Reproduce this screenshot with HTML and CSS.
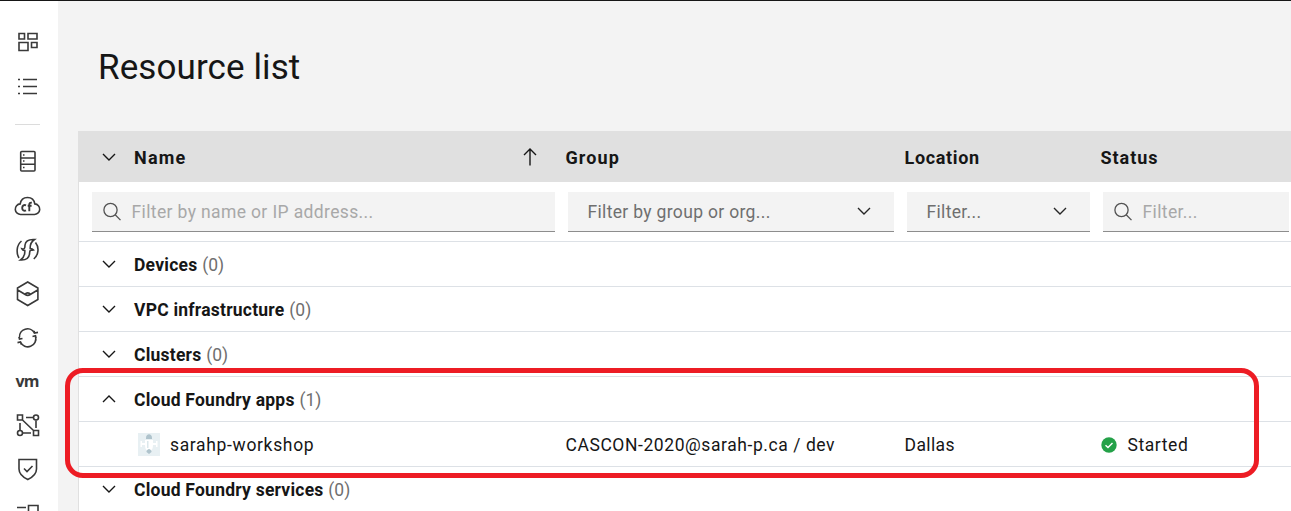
FILE: index.html
```html
<!DOCTYPE html>
<html lang="en">
<head>
<meta charset="utf-8">
<title>Resource list</title>
<link rel="stylesheet" href="styles.css">
</head>
<body>
<svg class="defs" aria-hidden="true">
  <symbol id="chevron" viewBox="0 0 14 8"><path d="M1 1l6 6 6-6"/></symbol>
  <symbol id="search" viewBox="0 0 20 20"><circle cx="8.500" cy="8" r="6.600"/><path d="M13.200 12.800l5.300 5.300"/></symbol>
</svg>
<div class="app">
  <nav class="sidebar">
    <svg class="nav-icon" viewBox="0 0 28 28"><path d="M5 5.500h5.500v5.500H5zM14 5.500h9v5.500h-9zM5 14.500h9v8H5zM17.500 14.500h5.500v5h-5.500z"/></svg>
    <svg class="nav-icon list" viewBox="0 0 28 28"><path d="M4 6.500h2M9 6.500h14M4 13.500h2M9 13.500h14M4 20.500h2M9 20.500h14"/></svg>
    <div class="divider"></div>
    <svg class="nav-icon" viewBox="0 0 28 28"><rect x="6.700" y="4.500" width="14.300" height="19.500" rx="1"/><path d="M7 11h14M7 17.300h14"/><path class="dots" d="M9 7.200h1.500v1.500H9zM9 13.300h1.500v1.500H9zM9 19.700h1.500v1.500H9z"/></svg>
    <svg class="nav-icon cloud" viewBox="0 0 28 28"><path d="M7 22.500h13a5.300 5.300 0 0 0 .8-10.600C20.200 8 17.200 5.500 13.500 5.500S6.800 8 6.200 11.900a5.300 5.300 0 0 0 .8 10.600z"/><path class="cf" d="M12 13.300c-1.700-.8-3.800 0-3.800 2.600s2.100 3.400 3.800 2.500M15.300 19.200v-6.500c0-1.600.8-2.200 2.500-1.900M13.700 13.800h3.900"/></svg>
    <svg class="nav-icon" viewBox="0 0 28 28"><path d="M20.500 3.500c-5-.3-9 1.200-9.500 5.500-.2 1.500.2 2.500-.7 3.500-.6.700-1.500.5-2.500.2.600 1.500 2 1.800 3 1.900.2 3.900-1.300 7.400-4.300 9.400 5 .3 8.500-2 9-6 .2-1.500 0-2.800.9-3.500.7-.6 1.700-.3 3.100-.5-.9-1.200-2-1.500-3.300-1.500-.2-4 1.300-7 4.300-9zM7.500 5c-5 4-5.500 12-2.500 17M21.500 6.500c4 5 3 12.500-1.700 16.500"/></svg>
    <svg class="nav-icon" viewBox="0 0 28 28"><path d="M13.700 2l10.200 6v11.500l-10.200 6-10.200-6V8zM3.700 10l7.500 4.500c1.500 1 3.500 1 5 0l7.500-4.500M11.200 14.500c1-2.200 4-2.200 5 0"/></svg>
    <svg class="nav-icon" viewBox="0 0 28 28"><path d="M5.500 13.500A8 8 0 0 1 20.500 9M21.500 12.500A8 8 0 0 1 6.500 18M18.500 12.500l3-.7.600 2.400M20.200 6.800l.3 2.200 3.500-.6M8.500 14.500l-3 .6-.6-2.400M3.500 18.600l3-.6.800 2.600"/></svg>
    <div class="nav-icon vm">vm</div>
    <svg class="nav-icon" viewBox="0 0 28 28"><path d="M3.500 4h5v5h-5zM19.500 19.500h5v5h-5zM8.500 9l11 10.500M12 6.500h7M22 9.500V17M6 12v7.500M9 22h8"/><circle cx="22" cy="6.500" r="2.500"/><circle cx="6" cy="22" r="2.500"/></svg>
    <svg class="nav-icon" viewBox="0 0 28 28"><path d="M5 4.500h17.500V14c0 5-3.500 8-8.700 10.500C8.500 22 5 19 5 14zM10 13.500l3 3 5.500-5.500"/></svg>
    <svg class="nav-icon" viewBox="0 0 28 28"><path d="M3 8.500h9M14.500 6.500h9.500v9h-9.500z"/></svg>
  </nav>
  <main class="main">
    <h1 class="title">Resource list</h1>
    <section class="table">
      <div class="columns head">
        <div class="cell"><svg class="chevron"><use href="#chevron"/></svg><span class="w-name">Name</span><svg class="sort" viewBox="0 0 14 18"><path d="M7 17.500V1M1 7l6-6 6 6"/></svg></div>
        <div class="cell"><span class="w-group">Group</span></div>
        <div class="cell"><span class="w-location">Location</span></div>
        <div class="cell"><span class="w-status">Status</span></div>
      </div>
      <div class="filters">
        <div class="field search"><svg class="lens"><use href="#search"/></svg><span>Filter by name or IP address...</span></div>
        <div class="field select"><span>Filter by group or org...</span><svg class="chevron"><use href="#chevron"/></svg></div>
        <div class="field select"><span>Filter...</span><svg class="chevron"><use href="#chevron"/></svg></div>
        <div class="field search"><svg class="lens"><use href="#search"/></svg><span>Filter...</span></div>
      </div>
      <div class="row"><svg class="chevron"><use href="#chevron"/></svg><b>Devices</b><span class="count">(0)</span></div>
      <div class="row"><svg class="chevron"><use href="#chevron"/></svg><b>VPC infrastructure</b><span class="count">(0)</span></div>
      <div class="row"><svg class="chevron"><use href="#chevron"/></svg><b>Clusters</b><span class="count">(0)</span></div>
      <div class="row"><svg class="chevron up"><use href="#chevron"/></svg><b>Cloud Foundry apps</b><span class="count">(1)</span></div>
      <div class="columns item">
        <div class="cell app-name"><svg class="thumb" viewBox="0 0 22 23"><path fill="#e8f0f3" d="M0 0h22v23H0z"/><path fill="#fff" d="M2.500 8h1.500v2h3V7h8v3h3V8h1.500v6H18v-2h-3c0 3-1 5-2 5H9c-1 0-2-2-2-5H4v2H2.500z"/><path fill="#afc3cc" d="M8 5c0-5 6-5 6 0v1H8zM8.500 18q2.500-4 5 0v1l-2.500 2-2.500-2z"/><path fill="#dce8ec" d="M9 8h1.500v7H9z"/></svg><span class="w-workshop">sarahp-workshop</span></div>
        <div class="cell"><span>CASCON-2020@sarah-p.ca / dev</span></div>
        <div class="cell"><span class="w-dallas">Dallas</span></div>
        <div class="cell"><svg class="ok" viewBox="0 0 16 16"><circle cx="8" cy="8" r="7.700"/><path d="M4.500 8.200l2.500 2.400 4.500-4.700"/></svg><span>Started</span></div>
      </div>
      <div class="row"><svg class="chevron"><use href="#chevron"/></svg><b>Cloud Foundry services</b><span class="count">(0)</span></div>
    </section>
  </main>
  <div class="highlight"></div>
</div>
</body>
</html>
```
FILE: styles.css
```css
* { box-sizing: border-box; }
body { margin: 0; background: #f3f3f3; color: #161616; font: 17.5px/24px Roboto, "Liberation Sans", sans-serif; overflow: hidden; }
.defs { position: absolute; width: 0; height: 0; }
svg { fill: none; stroke: currentColor; flex: none; }
.app { display: flex; height: 511px; border-top: 1px solid #161616; overflow: hidden; position: relative; }
.sidebar { width: 58px; flex: none; background: #fff; display: flex; flex-direction: column; align-items: center; gap: 16px; padding: 27px 2px 0 0; color: #393939; }
.nav-icon { width: 28px; height: 28px; flex: none; stroke-width: 1.6; }
.nav-icon.list, .nav-icon.cloud { margin-top: 1px; }
.nav-icon .dots { fill: currentColor; stroke: none; }
.nav-icon .cf { stroke-width: 1.9; }
.divider { width: 25px; height: 1px; background: #dcdcdc; flex: none; margin: 7px 2px 6px 0; }
.nav-icon.vm { font: bold 16px/28px "Open Sans", sans-serif; text-align: center; letter-spacing: -.9px; margin-top: -1px; padding-right: 2px; }
.main { flex: 1; min-width: 0; padding-left: 20px; }
.title { margin: 0; height: 130px; padding: 44px 0 0 20px; font-size: 35px; line-height: 46px; font-weight: 400; letter-spacing: .1px; }
.table { background: #fff; border-left: 1px solid #e0e0e0; }
.columns { display: grid; grid-template-columns: 486.5px 339px 196px 190.500px; }
.cell { display: flex; align-items: center; white-space: nowrap; }
.head { height: 51px; background: #e0e0e0; font-weight: 700; font-size: 18px; padding-top: 1px; }
.head span { padding-top: 2px; }
.w-name { letter-spacing: 1.2px; }
.w-group { letter-spacing: 1.1px; }
.w-location { letter-spacing: .65px; }
.w-status { letter-spacing: .95px; }
.chevron { width: 14px; height: 8px; stroke-width: 1.4; }
.head .chevron, .row .chevron { margin: -1px 18px 0 23px; }
.up { transform: rotate(180deg); }
.sort { width: 14px; height: 18px; margin: 0 0 0 auto; stroke-width: 1.4; }
.head .cell:first-child { padding-right: 28.5px; }
.filters { display: grid; grid-template-columns: 463px 326px 183px 186px; gap: 13px; height: 60px; padding: 10px 0 9px 13px; border-bottom: 1px solid #dde1e6; letter-spacing: .37px; }
.field { height: 40px; background: #f3f3f3; border-bottom: 1px solid #8d8d8d; display: flex; align-items: center; white-space: nowrap; }
.search { color: #a8a8a8; padding-left: 10px; gap: 9.5px; }
.lens { width: 20px; height: 20px; color: #525252; stroke-width: 1.3; }
.select { color: #6f6f6f; justify-content: space-between; padding: 0 23px 0 19.5px; letter-spacing: .33px; }
.select .chevron { color: #262626; margin-top: -1px; }
.row { height: 45px; border-bottom: 1px solid #dde1e6; display: flex; align-items: center; white-space: nowrap; padding-top: 1px; }
.row b { font-weight: 700; letter-spacing: .23px; }
.count { color: #6f6f6f; margin-left: 4.8px; }
.item { height: 45px; border-bottom: 1px solid #dde1e6; padding-top: 2px; letter-spacing: .57px; }
.w-workshop { letter-spacing: .66px; }
.w-dallas { letter-spacing: .4px; }
.app-name { padding-left: 59px; }
.thumb { width: 22px; height: 23px; stroke: none; margin: -2px 10px 0 0; }
.ok { width: 16px; height: 16px; margin-right: 11px; stroke: none; }
.ok circle { fill: #24a148; }
.ok path { stroke: #fff; stroke-width: 1.4; }
.highlight { position: absolute; left: 65px; top: 367px; width: 1194px; height: 110px; border: 5px solid #ed1c24; border-radius: 18px; }
```
